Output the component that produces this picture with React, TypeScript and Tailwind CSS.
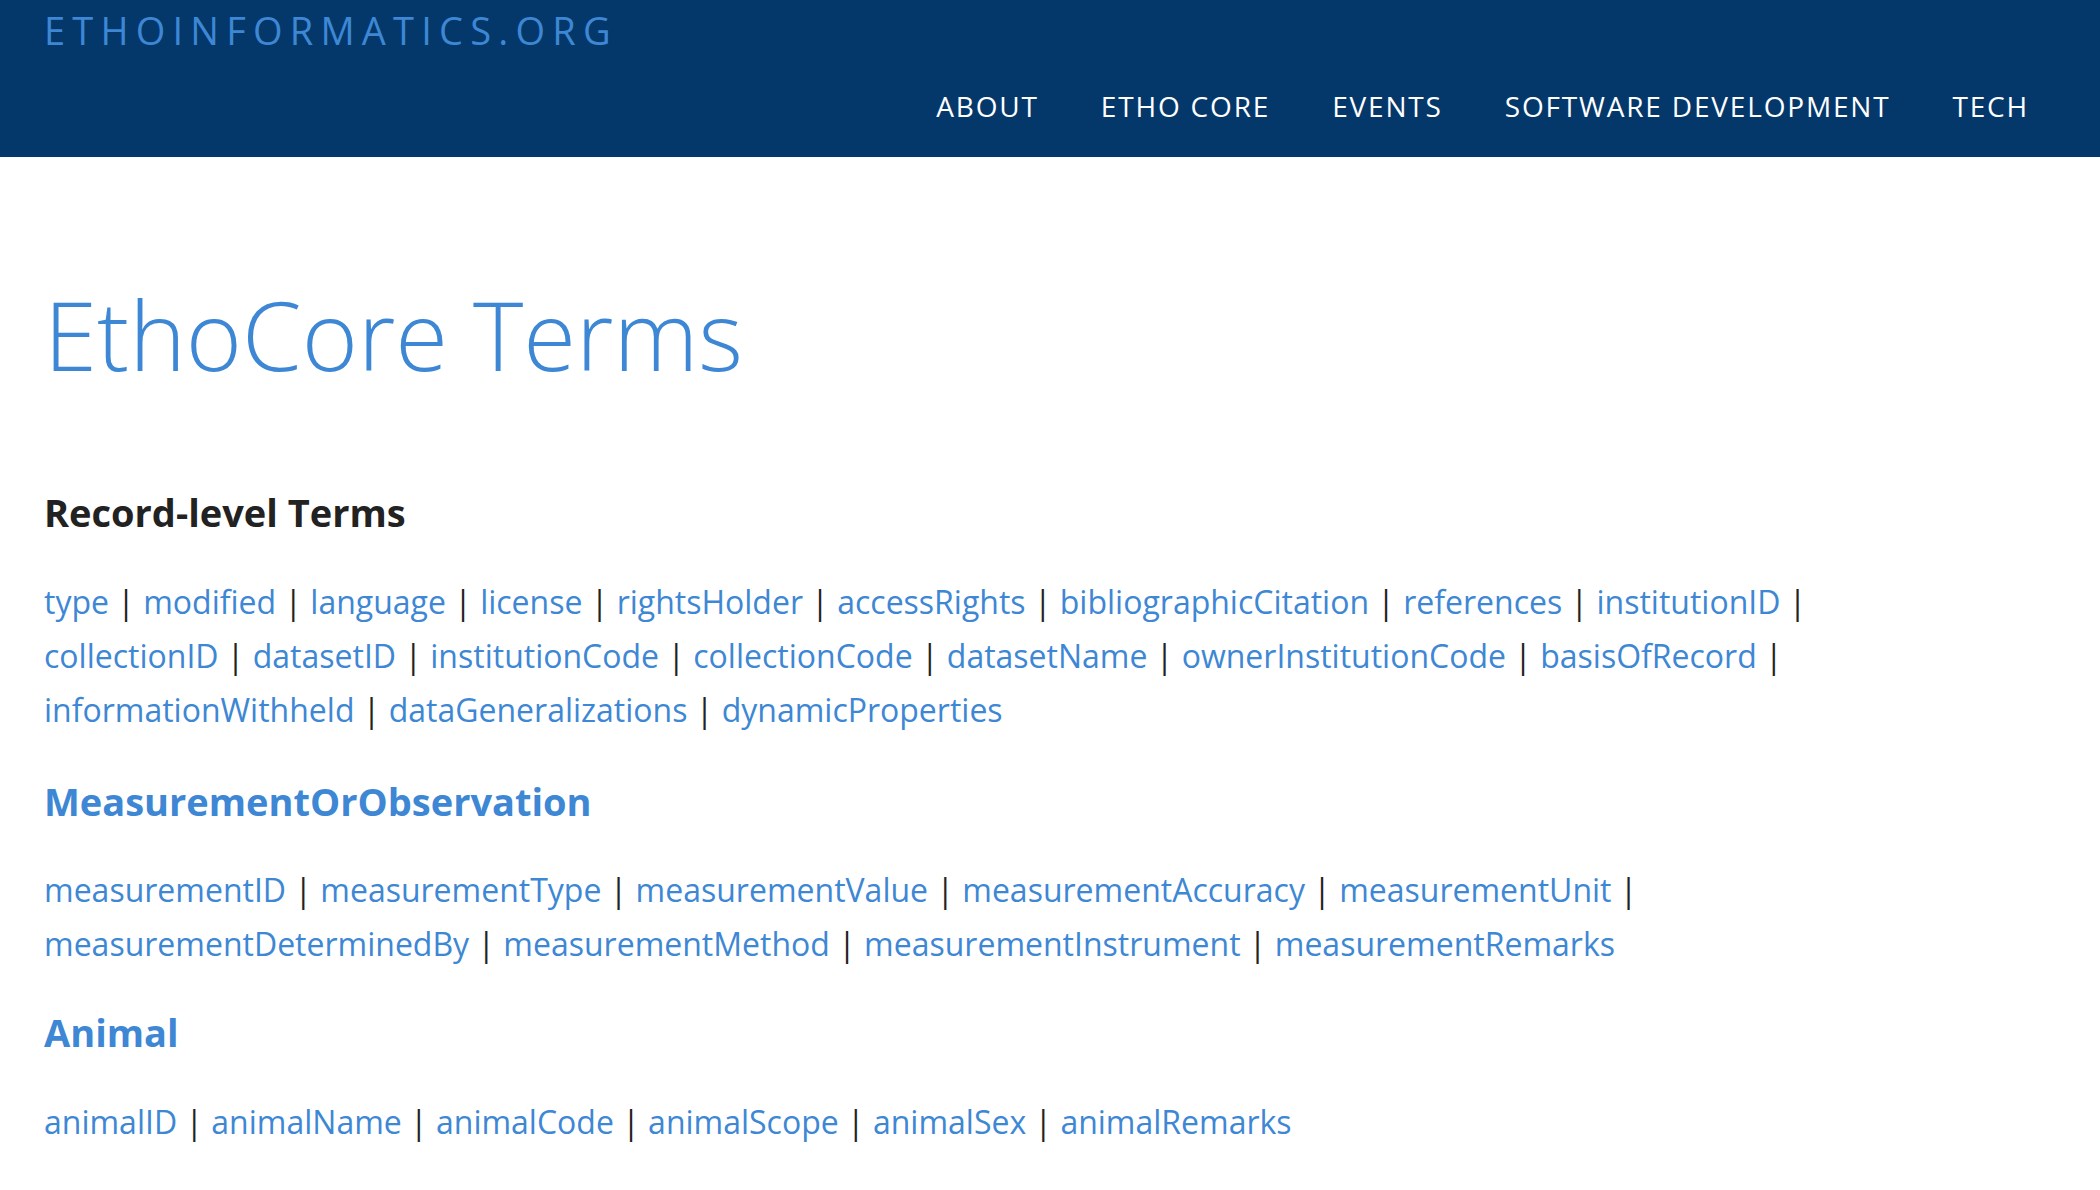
import React from "react";

const navItems = ["About", "Etho Core", "Events", "Software Development", "Tech"];

const recordLevel = [
  ["type", "modified", "language", "license", "rightsHolder", "accessRights", "bibliographicCitation", "references", "institutionID"],
  ["collectionID", "datasetID", "institutionCode", "collectionCode", "datasetName", "ownerInstitutionCode", "basisOfRecord"],
  ["informationWithheld", "dataGeneralizations", "dynamicProperties"],
];

const measurement = [
  ["measurementID", "measurementType", "measurementValue", "measurementAccuracy", "measurementUnit"],
  ["measurementDeterminedBy", "measurementMethod", "measurementInstrument", "measurementRemarks"],
];

const animal = [["animalID", "animalName", "animalCode", "animalScope", "animalSex", "animalRemarks"]];

// each inner array is one printed line, a pipe goes between all terms
const TermList = ({ lines, className }: { lines: string[][]; className: string }) => (
  <p className={"text-[32px] leading-[54px] text-[#222] " + className}>
    {lines.map((line, li) => (
      <span key={li} className="block whitespace-nowrap">
        {line.map((term, ti) => (
          <React.Fragment key={term}>
            <a href={"#" + term} className="text-[#3d87d4] hover:underline">
              {term}
            </a>
            {(ti < line.length - 1 || li < lines.length - 1) && " | "}
          </React.Fragment>
        ))}
      </span>
    ))}
  </p>
);

export default function App() {
  return (
    <div className="min-h-screen bg-white" style={{ fontFamily: '"Open Sans", "Liberation Sans", sans-serif' }}>
      <header className="h-[157px] bg-[#04386b] px-[44px]">
        <div className="text-[38px] leading-[60px] tracking-[0.19em] text-[#3d87d4]">ETHOINFORMATICS.ORG</div>
        <nav className="mt-[25px] flex justify-end gap-[62px] pr-[27px] text-[28px] font-medium leading-[42px] uppercase tracking-[0.065em] text-white">
          {navItems.map((item) => (
            <a key={item} href="#">
              {item}
            </a>
          ))}
        </nav>
      </header>

      <main className="px-[44px]">
        <h1 className="mt-[122px] text-[96px] font-light leading-[110px] text-[#3d87d4]">EthoCore Terms</h1>

        <h2 className="mt-[101px] text-[38px] font-bold leading-[44px] text-[#222]">Record-level Terms</h2>
        <TermList lines={recordLevel} className="mt-[41px]" />

        <h2 className="mt-[42px] text-[38px] font-bold leading-[44px] text-[#3d87d4]">MeasurementOrObservation</h2>
        <TermList lines={measurement} className="mt-[40px]" />

        <h2 className="mt-[39px] text-[38px] font-bold leading-[44px] text-[#3d87d4]">Animal</h2>
        <TermList lines={animal} className="mt-[41px]" />
      </main>
    </div>
  );
}
